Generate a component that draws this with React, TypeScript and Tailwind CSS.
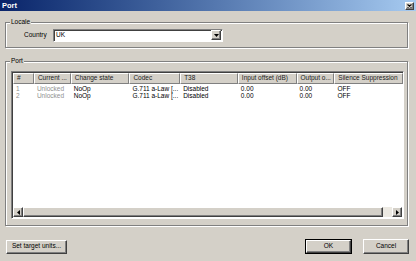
import React from 'react';

const raised = 'border border-t-white border-l-white border-r-[#404040] border-b-[#404040] shadow-[inset_-1px_-1px_0_#808080]';
const sunken = 'border border-t-[#808080] border-l-[#808080] border-r-white border-b-white shadow-[inset_1px_1px_0_#404040]';

const cols = [
  { label: '#', w: 21 },
  { label: 'Current ...', w: 37 },
  { label: 'Change state', w: 59 },
  { label: 'Codec', w: 51 },
  { label: 'T38', w: 58 },
  { label: 'Input offset (dB)', w: 59 },
  { label: 'Output o...', w: 38 },
  { label: 'Silence Suppression', w: 69 },
];

const rows = [
  ['1', 'Unlocked', 'NoOp', 'G.711 a-Law [...', 'Disabled', '0.00', '0.00', 'OFF'],
  ['2', 'Unlocked', 'NoOp', 'G.711 a-Law [...', 'Disabled', '0.00', '0.00', 'OFF'],
];

function GroupBox({ label, className, children }: { label: string; className: string; children: React.ReactNode }) {
  return (
    <div className={'relative border border-[#808080] shadow-[inset_1px_1px_0_#fff,1px_1px_0_#fff] ' + className}>
      <span className="absolute -top-[5px] left-[4px] px-[1px] bg-[#d4d0c8] leading-[8px] text-[6.5px]">{label}</span>
      {children}
    </div>
  );
}

function Arrow({ dir }: { dir: 'left' | 'right' | 'down' }) {
  const pts = dir === 'down' ? '0,0 5,0 2.5,3' : dir === 'left' ? '3,0 3,5 0,2.5' : '0,0 0,5 3,2.5';
  return (
    <svg width={dir === 'down' ? 5 : 3} height={dir === 'down' ? 3 : 5} viewBox={dir === 'down' ? '0 0 5 3' : '0 0 3 5'}>
      <polygon points={pts} fill="#000" />
    </svg>
  );
}

export default function App() {
  return (
    <div className="w-[416px] h-[261px] bg-[#d4d0c8] flex flex-col font-['Liberation_Sans',Arial,sans-serif] text-[6.5px] text-black overflow-hidden">
      <div className="h-[11px] flex items-center justify-between bg-gradient-to-r from-[#0a246a] to-[#a6caf0] pl-[2px] pr-[2px]">
        <span className="text-white font-bold text-[7.5px] leading-none">Port</span>
        <div className={'w-[9px] h-[8px] bg-[#d4d0c8] flex items-center justify-center ' + raised}>
          <svg width="5" height="4" viewBox="0 0 5 4">
            <path d="M0.5 0.5 L4.5 3.5 M4.5 0.5 L0.5 3.5" stroke="#000" strokeWidth="1.1" />
          </svg>
        </div>
      </div>

      <GroupBox label="Locale" className="ml-[5px] mt-[11px] w-[403px] h-[26px] flex items-center">
        <span className="ml-[18px] w-[29px] leading-none">Country</span>
        <div className={'w-[170px] h-[13px] bg-white flex items-center justify-between ' + sunken}>
          <span className="pl-[2px] leading-none">UK</span>
          <div className={'w-[10px] h-[10px] mr-[1px] bg-[#d4d0c8] flex items-center justify-center ' + raised}>
            <Arrow dir="down" />
          </div>
        </div>
      </GroupBox>

      <GroupBox label="Port" className="ml-[5px] mt-[13px] w-[403px] h-[165px] pl-[5px] pt-[9px]">
        <div className={'w-[393px] h-[148px] bg-white flex flex-col ' + sunken}>
          <div className="flex h-[11px] ml-[1px] mt-[1px]">
            {cols.map((c) => (
              <div
                key={c.label}
                style={{ width: c.w }}
                className="h-[11px] bg-[#d4d0c8] text-[#222] border-t border-l border-t-white border-l-white border-r border-b border-r-[#808080] border-b-[#808080] pl-[3px] flex items-center whitespace-nowrap overflow-hidden leading-none"
              >
                {c.label}
              </div>
            ))}
          </div>
          <div className="flex-1 flex flex-col pt-[2px] ml-[1px]">
            {rows.map((r, i) => (
              <div key={i} className="flex h-[7px] items-center">
                {r.map((v, j) => (
                  <div
                    key={j}
                    style={{ width: cols[j].w }}
                    className={'pl-[3px] whitespace-nowrap leading-none ' + (j < 2 ? 'text-[#909090]' : 'text-black')}
                  >
                    {v}
                  </div>
                ))}
              </div>
            ))}
          </div>
          <div className="h-[10px] flex ml-[1px] mr-[1px] mb-[1px] bg-[#ece9e2]">
            <div className={'w-[10px] h-[10px] bg-[#d4d0c8] flex items-center justify-center ' + raised}>
              <Arrow dir="left" />
            </div>
            <div className={'w-[360px] h-[10px] bg-[#d4d0c8] ' + raised} />
            <div className="flex-1" />
            <div className={'w-[10px] h-[10px] bg-[#d4d0c8] flex items-center justify-center ' + raised}>
              <Arrow dir="right" />
            </div>
          </div>
        </div>
      </GroupBox>

      <div className="mt-[13px] flex items-center pl-[6px] pr-[7px]">
        <button className={'w-[61px] h-[14px] bg-[#d4d0c8] leading-none ' + raised}>Set target units...</button>
        <div className="flex-1" />
        <button className="w-[47px] h-[15px] bg-[#d4d0c8] border border-black leading-none">
          <div className={'w-full h-full flex items-center justify-center ' + raised}>OK</div>
        </button>
        <button className={'ml-[11px] w-[46px] h-[15px] bg-[#d4d0c8] leading-none ' + raised}>Cancel</button>
      </div>
    </div>
  );
}
